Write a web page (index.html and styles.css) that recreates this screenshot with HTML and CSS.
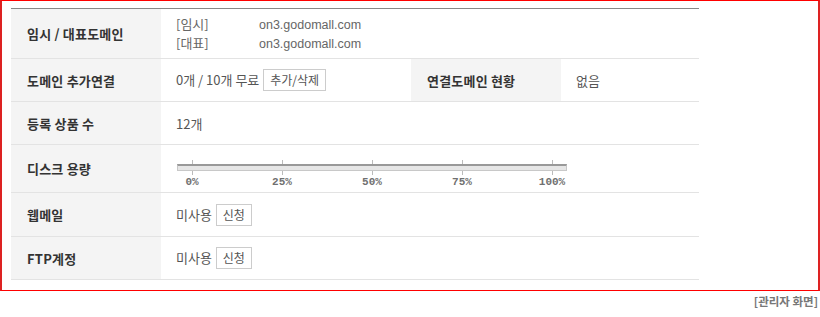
FILE: index.html
```html
<!DOCTYPE html>
<html>
<head>
<meta charset="utf-8">
<link rel="stylesheet" href="styles.css">
</head>
<body>
<div class="frame">
  <table class="info">
    <colgroup>
      <col class="c-head"><col class="c-val"><col class="c-head"><col class="c-last">
    </colgroup>
    <tr class="r1">
      <th>임시 / 대표도메인</th>
      <td colspan="3">
        <div class="dom"><span class="tag">[임시]</span><span class="url">on3.godomall.com</span></div>
        <div class="dom"><span class="tag">[대표]</span><span class="url">on3.godomall.com</span></div>
      </td>
    </tr>
    <tr class="r2">
      <th>도메인 추가연결</th>
      <td>0개 / 10개 무료 <span class="btn">추가/삭제</span></td>
      <th>연결도메인 현황</th>
      <td>없음</td>
    </tr>
    <tr class="r3">
      <th>등록 상품 수</th>
      <td colspan="3">12개</td>
    </tr>
    <tr class="r4">
      <th>디스크 용량</th>
      <td colspan="3" class="disk">
        <div class="gauge">
          <div class="ticks"><i></i><i></i><i></i><i></i><i></i></div>
          <div class="bar"></div>
          <div class="ticks"><i></i><i></i><i></i><i></i><i></i></div>
          <div class="labels"><span>0%</span><span>25%</span><span>50%</span><span>75%</span><span>100%</span></div>
        </div>
      </td>
    </tr>
    <tr class="r5">
      <th>웹메일</th>
      <td colspan="3">미사용 <span class="btn">신청</span></td>
    </tr>
    <tr class="r6">
      <th>FTP계정</th>
      <td colspan="3">미사용 <span class="btn">신청</span></td>
    </tr>
  </table>
</div>
<div class="caption">[관리자 화면]</div>
</body>
</html>
```

FILE: styles.css
```css
body
{
   margin: 0;
   font-family: "Noto Sans CJK KR", "Noto Sans", sans-serif;
   font-size: 13px;
   color: #555;
}

.frame
{
   box-sizing: border-box;
   width: 820px;
   height: 291px;
   border: 1px solid #f00;
   border-left: 2px solid #d22;
   border-right: 2px solid #d22;
   padding: 7px 0 0 9px;
}

.info
{
   width: 688px;
   border-collapse: collapse;
   border-top: 1px solid #888;
   table-layout: fixed;
}

.c-head { width: 150px; }
.c-val  { width: 250px; }
.c-last { width: 138px; }

.info th,
.info td
{
   border-bottom: 1px solid #e3e3e3;
   padding: 0 0 0 15px;
   text-align: left;
   vertical-align: middle;
   white-space: nowrap;
}

.info th
{
   background: #f4f4f4;
   color: #333;
   font-weight: bold;
   padding-left: 16px;
   letter-spacing: 0.2px;
}

.r1 { height: 50px; }
.r2 { height: 43px; }
.r3 { height: 43px; }
.r4 { height: 48px; }
.r5 { height: 44px; }
.r6 { height: 43px; }

.r1 td
{
   padding-top: 1px;
}

.dom
{
   line-height: 17px;
   color: #666;
}

.dom .tag
{
   display: inline-block;
   width: 83px;
}

.dom .url
{
   font-family: "Liberation Sans", sans-serif;
   font-size: 12.5px;
}

.btn
{
   display: inline-block;
   border: 1px solid #ccc;
   padding: 0 6px;
   line-height: 20px;
   font-size: 12px;
   color: #555;
   margin-left: 1px;
}

.info td.disk
{
   vertical-align: top;
   padding-top: 15px;
}

.gauge
{
   width: 390px;
   margin-left: 1px;
}

.ticks
{
   display: grid;
   grid-template-columns: repeat(5, 90px);
   margin-left: -30px;
   height: 4px;
}

.ticks i
{
   display: block;
   width: 1px;
   height: 4px;
   margin: 0 auto;
   background: #bbb;
}

.bar
{
   box-sizing: border-box;
   height: 7px;
   border: 1px solid #c8c8c8;
   border-top: 2px solid #999;
   background: #e6e6e6;
}

.labels
{
   display: grid;
   grid-template-columns: repeat(5, 90px);
   margin-left: -30px;
   font-family: "Liberation Mono", monospace;
   font-weight: bold;
   font-size: 11px;
   line-height: 15px;
   color: #707070;
   text-align: center;
}

.caption
{
   width: 818px;
   text-align: right;
   font-size: 11.5px;
   font-weight: bold;
   color: #777;
   padding-top: 2px;
}
```
